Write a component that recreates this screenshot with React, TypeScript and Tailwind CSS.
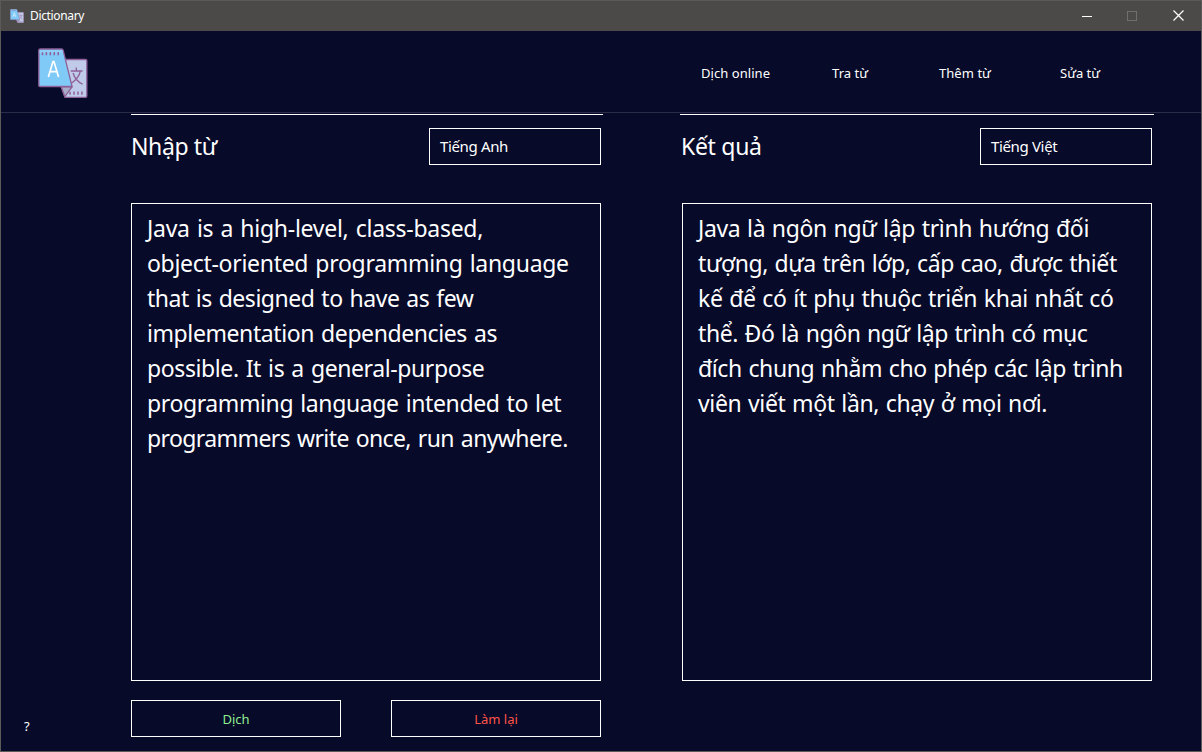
import React from "react";

type Line = { text: string; tracking: string };

const NAV = [
  { label: "Dịch online", cls: "w-[131px] tracking-[0.05px]" },
  { label: "Tra từ", cls: "w-[107px] tracking-[0.05px]" },
  { label: "Thêm từ", cls: "w-[121px] tracking-[0.05px]" },
  { label: "Sửa từ", cls: "w-[141px] tracking-[0px]" },
];

const SOURCE: Line[] = [
  { text: "Java is a high-level, class-based,", tracking: "tracking-[-0.27px] [word-spacing:1.5px]" },
  { text: "object-oriented programming language", tracking: "tracking-[-0.3px] [word-spacing:1.5px]" },
  { text: "that is designed to have as few", tracking: "tracking-[-0.49px] [word-spacing:1.5px]" },
  { text: "implementation dependencies as", tracking: "tracking-[-0.41px] [word-spacing:1.5px]" },
  { text: "possible. It is a general-purpose", tracking: "tracking-[-0.4px] [word-spacing:1.5px]" },
  { text: "programming language intended to let", tracking: "tracking-[-0.39px] [word-spacing:1.5px]" },
  { text: "programmers write once, run anywhere.", tracking: "tracking-[-0.6px] [word-spacing:1.5px]" },
];

const RESULT: Line[] = [
  { text: "Java là ngôn ngữ lập trình hướng đối", tracking: "tracking-[-0.34px] [word-spacing:1px]" },
  { text: "tượng, dựa trên lớp, cấp cao, được thiết", tracking: "tracking-[-0.42px] [word-spacing:1px]" },
  { text: "kế để có ít phụ thuộc triển khai nhất có", tracking: "tracking-[-0.35px] [word-spacing:1px]" },
  { text: "thể. Đó là ngôn ngữ lập trình có mục", tracking: "tracking-[-0.41px] [word-spacing:1px]" },
  { text: "đích chung nhằm cho phép các lập trình", tracking: "tracking-[-0.39px] [word-spacing:1px]" },
  { text: "viên viết một lần, chạy ở mọi nơi.", tracking: "tracking-[-0.36px] [word-spacing:1px]" },
];

function Logo({ className }: { className: string }) {
  return (
    <svg className={className} viewBox="24 22 151 152" fill="none">
      <path d="M100 57H168Q172 57 172 61V168Q172 172 168 172H106L94 139Z" fill="#bfcbe8" stroke="#8f6098" strokeWidth="4" />
      <path d="M94 140H127L105 170Z" fill="#a7acc9" stroke="#8f6098" strokeWidth="4" strokeLinejoin="round" />
      <path d="M123 92H159M140 81V91M152 93C149 108 137 121 124 130M130 98C135 115 146 126 159 132" stroke="#8f6098" strokeWidth="4" />
      <path d="M121 155V164M133 154V164M145 154V164M157 154V164" stroke="#8f6098" strokeWidth="4.5" />
      <path d="M30 25H95Q99 25 100 29L127 139H30Q26 139 26 135V29Q26 25 30 25Z" fill="#80caf8" stroke="#8f6098" strokeWidth="4" />
      <path d="M28 33H99" stroke="#a5d8fa" strokeWidth="8" opacity=".5" />
      <path d="M37 35V44M49 34V44M61 34V44M73 34V44M85 34V44" stroke="#8f6098" strokeWidth="4.5" />
      <path d="M55 110L69 63H72L86 110M60 94H81" stroke="white" strokeWidth="5" />
    </svg>
  );
}

function TitleBar() {
  return (
    <div className="flex h-[30px] shrink-0 items-center bg-[#4c4a48] pl-[9px]">
      <Logo className="h-[14px] w-[14px]" />
      <span className="ml-[6px] text-[12px] leading-[16px] tracking-[-0.35px]">Dictionary</span>
      <div className="ml-auto flex h-full">
        <div className="flex w-[46px] items-center justify-center pl-[2px]">
          <div className="h-px w-[10px] bg-white" />
        </div>
        <div className="flex w-[46px] items-center justify-center">
          <div className="h-[10px] w-[10px] border border-[#716f6e]" />
        </div>
        <div className="flex w-[46px] items-center justify-center pb-[2px]">
          <svg className="h-[11px] w-[11px]" viewBox="0 0 11 11" stroke="white" strokeWidth="1.2">
            <path d="M.5 .5L10.5 10.5M10.5 .5L.5 10.5" />
          </svg>
        </div>
      </div>
    </div>
  );
}

function Panel({ title, titleClass, language, lines }: { title: string; titleClass: string; language: string; lines: Line[] }) {
  return (
    <>
      <div className="flex h-[37px] items-center justify-between">
        <h2 className={`${titleClass} pb-px text-[23px] leading-[34px]`}>{title}</h2>
        <div className="flex h-[37px] w-[172px] items-center border border-white px-[10px] text-[15px] tracking-[-0.35px]">
          {language}
        </div>
      </div>
      <div className="mt-[38px] h-[478px] w-[470px] border border-white px-[15px] pt-[7px]">
        {lines.map((line) => (
          <p key={line.text} className="h-[35px] text-[23px] leading-[35px] whitespace-nowrap">
            <span className={line.tracking}>{line.text}</span>
          </p>
        ))}
      </div>
    </>
  );
}

export default function App() {
  return (
    <div className="flex h-[752px] w-[1202px] flex-col overflow-hidden border border-[#5b5a59] bg-[#070a29] font-['Noto_Sans','Open_Sans',sans-serif] text-white">
      <TitleBar />
      <header className="flex h-[82px] shrink-0 items-start justify-between border-b border-[#2b2d48] pt-[17px] pl-[37px]">
        <Logo className="h-[50px] w-[50px]" />
        <nav className="flex pt-[15px] text-[13px] leading-[20px]">
          {NAV.map((item) => (
            <a key={item.label} className={item.cls}>{item.label}</a>
          ))}
        </nav>
      </header>
      <main className="flex flex-1 pt-px">
        <aside className="flex w-[130px] items-end pb-[15px] pl-[23px] text-[13px] leading-[20px]">?</aside>
        <section className="w-[472px] border-t border-white pt-[13px] pr-[2px]">
          <Panel title="Nhập từ" titleClass="tracking-[-0.4px]" language="Tiếng Anh" lines={SOURCE} />
          <div className="mt-[19px] flex justify-between text-[13px]">
            <button className="h-[37px] w-[210px] border border-white pt-[2px] text-[#90ee90]">Dịch</button>
            <button className="h-[37px] w-[210px] border border-white pt-[2px] text-[#ff5347]">Làm lại</button>
          </div>
        </section>
        <section className="ml-[77px] w-[474px] border-t border-white pt-[13px] pr-[2px] pl-[2px]">
          <Panel title="Kết quả" titleClass="-ml-px tracking-[-0.3px]" language="Tiếng Việt" lines={RESULT} />
        </section>
      </main>
    </div>
  );
}
